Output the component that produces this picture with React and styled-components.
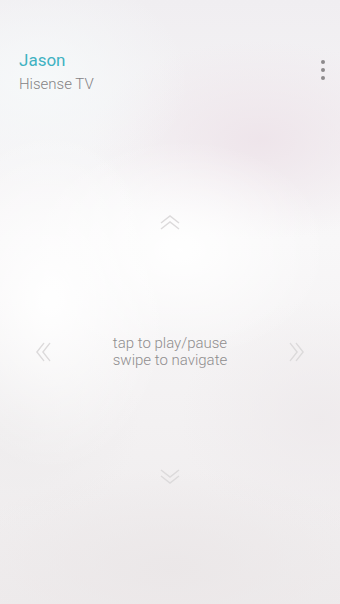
import styled, { createGlobalStyle } from "styled-components";

const GlobalStyle = createGlobalStyle`
  html, body {
    margin: 0;
    padding: 0;
    background: #f1eff0;
  }
  body {
    font-family: Roboto, "Noto Sans", "Liberation Sans", sans-serif;
  }
`;

function Chevrons({ dir }) {
  const rot = { up: 0, right: 90, down: 180, left: 270 }[dir];
  return (
    <ChevronSvg width="22" height="22" viewBox="0 0 22 22" style={{ transform: `rotate(${rot}deg)` }}>
      <path d="M2 10 L11 3 L20 10" />
      <path d="M2 16 L11 9 L20 16" />
    </ChevronSvg>
  );
}

function App() {
  return (
    <Screen>
      <GlobalStyle />
      <Header>
        <Titles>
          <Name>Jason</Name>
          <Device>Hisense TV</Device>
        </Titles>
        <Kebab>
          <Dot />
          <Dot />
          <Dot />
        </Kebab>
      </Header>
      <Pad>
        <Cell $col={2} $row={1}><Chevrons dir="up" /></Cell>
        <Cell $col={1} $row={2}><Chevrons dir="left" /></Cell>
        <Cell $col={2} $row={2}>
          <Hint>
            tap to play/pause
            <br />
            swipe to navigate
          </Hint>
        </Cell>
        <Cell $col={3} $row={2}><Chevrons dir="right" /></Cell>
        <Cell $col={2} $row={3}><Chevrons dir="down" /></Cell>
      </Pad>
    </Screen>
  );
}

const Screen = styled.div`
  width: 340px;
  height: 604px;
  overflow: hidden;
  display: flex;
  flex-direction: column;
  background:
    radial-gradient(ellipse 120px 170px at 50px 300px, rgba(255,255,255,0.95), rgba(255,255,255,0) 100%),
    radial-gradient(ellipse 150px 110px at 180px 250px, rgba(255,255,255,0.95), rgba(255,255,255,0) 100%),
    radial-gradient(ellipse 150px 110px at 40px 80px, rgba(246,249,250,0.95), rgba(246,249,250,0) 100%),
    radial-gradient(ellipse 170px 100px at 260px 140px, rgba(238,228,234,0.95), rgba(238,228,234,0) 100%),
    radial-gradient(ellipse 140px 120px at 320px 420px, rgba(238,234,236,0.9), rgba(238,234,236,0) 100%),
    radial-gradient(ellipse 120px 120px at 20px 420px, rgba(237,235,236,0.8), rgba(237,235,236,0) 100%),
    radial-gradient(ellipse 220px 100px at 170px 570px, rgba(235,231,232,0.95), rgba(235,231,232,0) 100%),
    linear-gradient(180deg, #f0eef1 0%, #f8f7f8 40%, #f3f1f2 70%, #eeebec 100%);
`;

const Header = styled.div`
  display: flex;
  justify-content: space-between;
  align-items: flex-start;
  padding: 49px 15px 0 19px;
`;

const Titles = styled.div`
  display: flex;
  flex-direction: column;
`;

const Name = styled.div`
  font-size: 17px;
  line-height: 22px;
  color: #3fb2c2;
`;

const Device = styled.div`
  font-size: 15px;
  line-height: 20px;
  margin-top: 3px;
  font-weight: 300;
  color: #858385;
`;

const Kebab = styled.div`
  display: flex;
  flex-direction: column;
  gap: 4px;
  padding-top: 11px;
`;

const Dot = styled.span`
  width: 4px;
  height: 4px;
  border-radius: 50%;
  background: #8d8a8c;
`;

const Pad = styled.div`
  flex: 1;
  display: grid;
  grid-template-columns: 90px 1fr 90px;
  grid-template-rows: 125px 132px 114px;
  padding-top: 67px;
`;

const Cell = styled.div`
  grid-column: ${({ $col }) => $col};
  grid-row: ${({ $row }) => $row};
  display: flex;
  align-items: center;
  justify-content: center;
`;

const ChevronSvg = styled.svg`
  fill: none;
  stroke: #dcdadb;
  stroke-width: 1.5;
  filter: blur(0.5px);
`;

const Hint = styled.div`
  font-size: 15px;
  line-height: 17px;
  text-align: center;
  font-weight: 300;
  color: #8f8d8e;
`;

export default App;
